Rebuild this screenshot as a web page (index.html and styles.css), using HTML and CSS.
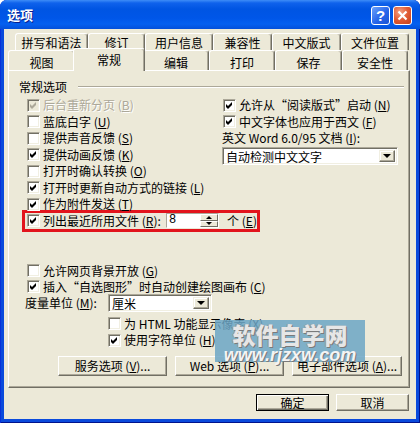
FILE: index.html
```html
<!DOCTYPE html>
<html lang="zh-CN">
<head>
    <meta charset="utf-8">
    <title>选项</title>
    <link rel="stylesheet" href="styles.css">
</head>
<body>
<div class="window">
    <div class="titlebar">
        <span class="title">选项</span>
        <span class="tbtn help">?</span>
        <span class="tbtn close">
            <svg width="11" height="11" viewBox="0 0 11 11"><path d="M1.5 1.5 L9.5 9.5 M9.5 1.5 L1.5 9.5" stroke="#fff" stroke-width="2.2"/></svg>
        </span>
    </div>

    <div class="client">
        <div class="tab-row back">
            <div class="tab">拼写和语法</div>
            <div class="tab">修订</div>
            <div class="tab">用户信息</div>
            <div class="tab">兼容性</div>
            <div class="tab">中文版式</div>
            <div class="tab">文件位置</div>
        </div>
        <div class="tab-row front">
            <div class="tab">视图</div>
            <div class="tab active">常规</div>
            <div class="tab">编辑</div>
            <div class="tab">打印</div>
            <div class="tab">保存</div>
            <div class="tab">安全性</div>
        </div>

        <div class="panel">
            <div class="group-head"><span>常规选项</span><span class="etch"></span></div>

            <div class="cols">
                <div class="col-left">
                    <div class="row disabled"><span class="cb"><svg viewBox="0 0 11 11"><path d="M2 4 L4 6 L8 2 V5 L4 9 L2 7Z"/></svg></span><span>后台重新分页 (<u>B</u>)</span></div>
                    <div class="row"><span class="cb"></span><span>蓝底白字 (<u>U</u>)</span></div>
                    <div class="row"><span class="cb"></span><span>提供声音反馈 (<u>S</u>)</span></div>
                    <div class="row"><span class="cb"><svg viewBox="0 0 11 11"><path d="M2 4 L4 6 L8 2 V5 L4 9 L2 7Z"/></svg></span><span>提供动画反馈 (<u>K</u>)</span></div>
                    <div class="row"><span class="cb"></span><span>打开时确认转换 (<u>O</u>)</span></div>
                    <div class="row"><span class="cb"><svg viewBox="0 0 11 11"><path d="M2 4 L4 6 L8 2 V5 L4 9 L2 7Z"/></svg></span><span>打开时更新自动方式的链接 (<u>L</u>)</span></div>
                    <div class="row"><span class="cb"><svg viewBox="0 0 11 11"><path d="M2 4 L4 6 L8 2 V5 L4 9 L2 7Z"/></svg></span><span>作为附件发送 (<u>T</u>)</span></div>
                    <div class="row recent">
                        <span class="cb"><svg viewBox="0 0 11 11"><path d="M2 4 L4 6 L8 2 V5 L4 9 L2 7Z"/></svg></span>
                        <span class="recent-lbl">列出最近所用文件 (<u>R</u>):</span>
                        <div class="spin">
                            <span class="spin-field">8</span>
                            <span class="spin-btns">
                                <span><i class="up"></i></span>
                                <span><i class="down"></i></span>
                            </span>
                        </div>
                        <span class="unit-ge">个 (<u>E</u>)</span>
                    </div>
                </div>

                <div class="col-right">
                    <div class="row"><span class="cb"><svg viewBox="0 0 11 11"><path d="M2 4 L4 6 L8 2 V5 L4 9 L2 7Z"/></svg></span><span>允许从<span class="q">“</span>阅读版式<span class="q">”</span>启动 (<u>N</u>)</span></div>
                    <div class="row"><span class="cb"><svg viewBox="0 0 11 11"><path d="M2 4 L4 6 L8 2 V5 L4 9 L2 7Z"/></svg></span><span>中文字体也应用于西文 (<u>F</u>)</span></div>
                    <div class="row plain">英文 Word 6.0/95 文档 (<u>I</u>):</div>
                    <div class="combo wide">
                        <span class="combo-text">自动检测中文文字</span>
                        <span class="combo-arrow"><i class="down big"></i></span>
                    </div>
                </div>
            </div>

            <div class="lower">
                <div class="row"><span class="cb"></span><span>允许网页背景开放 (<u>G</u>)</span></div>
                <div class="row"><span class="cb"><svg viewBox="0 0 11 11"><path d="M2 4 L4 6 L8 2 V5 L4 9 L2 7Z"/></svg></span><span>插入<span class="q">“</span>自选图形<span class="q">”</span>时自动创建绘图画布 (<u>C</u>)</span></div>
                <div class="row measure">
                    <span class="measure-lbl">度量单位 (<u>M</u>):</span>
                    <div class="combo small">
                        <span class="combo-text">厘米</span>
                        <span class="combo-arrow"><i class="down big"></i></span>
                    </div>
                </div>
                <div class="sub">
                    <div class="row"><span class="cb"></span><span>为 HTML 功能显示像素 (<u>X</u>)</span></div>
                    <div class="row"><span class="cb"><svg viewBox="0 0 11 11"><path d="M2 4 L4 6 L8 2 V5 L4 9 L2 7Z"/></svg></span><span>使用字符单位 (<u>H</u>)</span></div>
                </div>
            </div>

            <div class="btn-row">
                <span class="btn">服务选项 (<u>V</u>)...</span>
                <span class="btn">Web 选项 (<u>P</u>)...</span>
                <span class="btn">电子部件选项 (<u>A</u>)...</span>
            </div>
        </div>

        <div class="dialog-btns">
            <span class="btn default">确定</span>
            <span class="btn">取消</span>
        </div>
    </div>

    <div class="watermark">
        <span class="wm-big">软件自学网</span>
        <span class="wm-url">www.rjzxw.com</span>
    </div>
</div>
</body>
</html>
```

FILE: styles.css
```css
* { box-sizing: border-box; }
body { margin: 0; background: #fff; font-family: "Noto Sans CJK SC", sans-serif; font-size: 12px; line-height: 14px; color: #000; }
u { text-underline-offset: 1px; }
.q { font-feature-settings: "fwid"; }

/* window frame */
.window { position: relative; width: 420px; height: 423px; display: flex; flex-direction: column; background: #0A4ADC; border-radius: 7px 7px 0 0; overflow: hidden; box-shadow: inset 1px 0 #0831D9, inset -1px 0 #00138C, inset 0 -1px #00138C; }
.titlebar { height: 29px; flex: none; display: flex; align-items: center; gap: 3px; padding: 1px 8px 0 7px; background: linear-gradient(to bottom, #3E8DF7 0, #0F62EC 3px, #0055E3 9px, #0056E8 18px, #0560F0 24px, #0450DA 29px); }
.title { flex: 1; color: #fff; font-weight: bold; font-size: 13px; text-shadow: 1px 1px #0A1E8C; }
.tbtn { width: 19px; height: 19px; border: 1px solid #fff; border-radius: 3px; display: flex; align-items: center; justify-content: center; }
.help { background: linear-gradient(135deg, #6CA2FB, #2766EA 55%, #1A52D4); color: #fff; font: bold 15px "Liberation Sans", sans-serif; }
.close { background: radial-gradient(circle at 35% 30%, #F2A184, #E05A33 50%, #C4401C); }

.client { flex: 1; margin: 0 4px 4px; background: #ECE9D8; padding-top: 4px; }

/* tabs */
.tab-row { display: flex; }
.tab-row.back { height: 17px; margin-left: 11px; }
.tab-row.front { height: 20px; margin-left: 4px; }
.tab { border: 1px solid; border-bottom: none; border-color: #fff #716F64 transparent #fff; box-shadow: inset -1px 0 #ACA899; border-radius: 3px 3px 0 0; text-align: center; background: #ECE9D8; white-space: nowrap; }
.back .tab { padding-top: 2px; }
.back .tab:nth-child(1) { width: 73px; }
.back .tab:nth-child(2) { width: 57px; }
.back .tab:nth-child(3) { width: 68px; }
.back .tab:nth-child(4) { width: 59px; }
.back .tab:nth-child(5) { width: 69px; }
.back .tab:nth-child(6) { width: 68px; }
.front .tab { width: 67px; padding-top: 5px; }
.front .tab:nth-child(3), .front .tab:nth-child(4), .front .tab:nth-child(6) { width: 66px; }
.front .tab.active { position: relative; z-index: 1; width: 72px; height: 23px; margin: -2px -2px 0; padding-top: 4px; }

/* panel */
.panel { margin-left: 4px; width: 402px; height: 318px; padding-top: 8px; border: 1px solid; border-color: #fff #716F64 #716F64 #fff; box-shadow: inset -1px -1px #ACA899; }
.group-head { height: 16px; display: flex; align-items: center; padding-left: 10px; }
.etch { flex: 1; height: 2px; margin: 0 5px 0 11px; border-top: 1px solid #ACA899; border-bottom: 1px solid #fff; }

.cols { display: flex; padding: 2px 11px 0 18px; }
.col-left { width: 195px; flex: none; }
.col-right { flex: 1; }
.row { height: 16.5px; display: flex; align-items: center; white-space: nowrap; }
.col-right .row { padding-left: 1px; }
.col-right .row.plain { padding-left: 0; }

.cb { width: 13px; height: 13px; flex: none; margin-right: 3px; background: #fff; border: 1px solid; border-color: #ACA899 #fff #fff #ACA899; box-shadow: inset 1px 1px #716F64, inset -1px -1px #F1EFE2; }
.cb svg { display: block; width: 11px; height: 11px; fill: #000; }
.disabled { color: #ACA899; text-shadow: 1px 1px #fff; }
.disabled .cb { background: #ECE9D8; }
.disabled .cb svg { fill: #ACA899; }

.recent { width: 238px; height: 22px; margin: -3px 0 0 -5px; padding-left: 2px; border: 3px solid #E2141C; }
.recent-lbl { width: 127px; }
.spin { display: flex; height: 15px; border: 1px solid; border-color: #ACA899 #fff #fff #ACA899; background: #fff; }
.spin-field { width: 33px; padding-left: 2px; line-height: 13px; font-family: "Liberation Mono", monospace; }
.spin-btns { width: 18px; display: flex; flex-direction: column; }
.spin-btns span { flex: 1; display: flex; align-items: center; justify-content: center; background: #ECE9D8; border: 1px solid; border-color: #fff #716F64 #716F64 #fff; }
.up, .down { width: 0; height: 0; border-left: 3px solid transparent; border-right: 3px solid transparent; }
.up { border-bottom: 3px solid #000; }
.down { border-top: 3px solid #000; }
.down.big { border-left-width: 4px; border-right-width: 4px; border-top-width: 4px; }
.unit-ge { margin-left: 8px; }

.combo { display: flex; background: #fff; border: 1px solid; border-color: #ACA899 #fff #fff #ACA899; box-shadow: inset 1px 1px #716F64, inset -1px -1px #F1EFE2; padding: 2px; }
.combo.wide { width: 176px; height: 18px; }
.combo.small { width: 104px; height: 18px; }
.combo-text { flex: 1; padding-left: 1px; line-height: 14px; }
.combo-arrow { width: 16px; display: flex; align-items: center; justify-content: center; background: #ECE9D8; border: 1px solid; border-color: #F1EFE2 #716F64 #716F64 #F1EFE2; box-shadow: inset -1px -1px #ACA899, inset 1px 1px #fff; }

/* lower options */
.lower { margin-top: 31px; padding-left: 18px; }
.lower .row { height: 16px; }
.lower .row.measure { height: 17px; }
.measure-lbl { width: 83px; margin-left: -2px; }
.sub { padding-left: 81px; margin-top: 4px; }
.sub .row:last-child { height: 17px; }

/* buttons */
.btn { height: 20px; display: flex; align-items: center; justify-content: center; white-space: nowrap; background: #ECE9D8; border: 1px solid; border-color: #fff #716F64 #716F64 #fff; box-shadow: inset -1px -1px #ACA899; }
.btn-row { display: flex; gap: 8px; margin-top: 7px; padding-left: 49px; }
.btn-row .btn { width: 109px; }
.btn-row .btn:last-child { width: 110px; }
.dialog-btns { display: flex; justify-content: flex-end; gap: 7px; padding-right: 7px; margin-top: 6px; }
.dialog-btns .btn { width: 73px; height: 17px; }
.btn.default { border-color: #000; box-shadow: inset 1px 1px #fff, inset -1px -1px #716F64, inset -2px -2px #ACA899; }

/* site watermark laid over the dialog */
.watermark { position: absolute; left: 215px; top: 320px; width: 150px; height: 42px; display: flex; flex-direction: column; align-items: center; background: rgba(108, 166, 197, 0.85); }
.wm-big { font: 900 23px/24px "Noto Sans CJK SC", sans-serif; color: #E6E6E6; text-shadow: 1px 1px #7A7A7A, -1px 0 #9A9A9A; margin-top: 2px; }
.wm-url { font: italic bold 18px/18px "Liberation Sans", sans-serif; color: #F4F4F4; text-shadow: 1px 1px #7A7A7A; }
```
